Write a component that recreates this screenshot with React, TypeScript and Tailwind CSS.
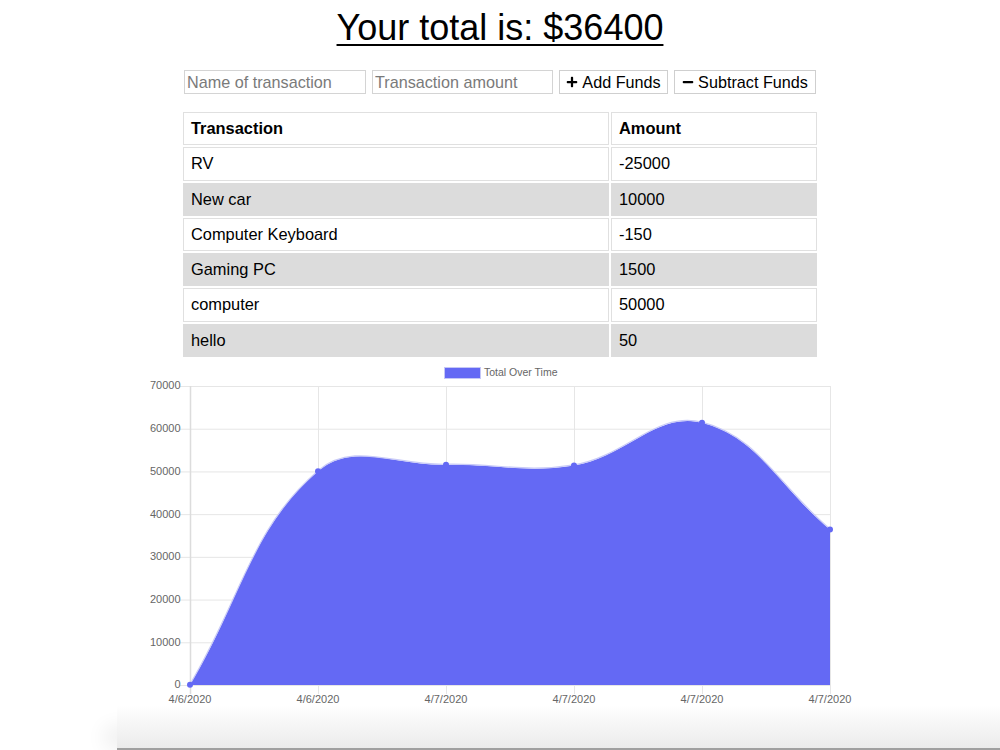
import React from "react";
import { FaPlus, FaMinus } from "react-icons/fa";

const rows: [string, string][] = [
  ["RV", "-25000"],
  ["New car", "10000"],
  ["Computer Keyboard", "-150"],
  ["Gaming PC", "1500"],
  ["computer", "50000"],
  ["hello", "50"],
];

const values = [50, 50050, 51550, 51400, 61400, 36400];
const xs = [190, 318, 446, 574, 702, 830];
const TOP = 386;
const BOTTOM = 685;
const yOf = (v: number) => BOTTOM - (v / 70000) * (BOTTOM - TOP);

type P = { x: number; y: number };

function spline(prev: P, cur: P, next: P, t: number) {
  const d01 = Math.hypot(cur.x - prev.x, cur.y - prev.y);
  const d12 = Math.hypot(next.x - cur.x, next.y - cur.y);
  let s01 = d01 / (d01 + d12);
  let s12 = d12 / (d01 + d12);
  if (isNaN(s01)) s01 = 0;
  if (isNaN(s12)) s12 = 0;
  const fa = t * s01;
  const fb = t * s12;
  return {
    previous: { x: cur.x - fa * (next.x - prev.x), y: cur.y - fa * (next.y - prev.y) },
    next: { x: cur.x + fb * (next.x - prev.x), y: cur.y + fb * (next.y - prev.y) },
  };
}

const clamp = (p: P): P => ({
  x: Math.min(Math.max(p.x, 190), 830),
  y: Math.min(Math.max(p.y, TOP), BOTTOM),
});

function buildPath() {
  const pts: P[] = values.map((v, i) => ({ x: xs[i], y: yOf(v) }));
  const cps = pts.map((p, i) => {
    const prev = pts[i - 1] ?? p;
    const next = pts[i + 1] ?? p;
    const c = spline(prev, p, next, 0.4);
    return { previous: clamp(c.previous), next: clamp(c.next) };
  });
  let d = `M ${pts[0].x} ${pts[0].y}`;
  for (let i = 0; i < pts.length - 1; i++) {
    const a = cps[i].next;
    const b = cps[i + 1].previous;
    const p = pts[i + 1];
    d += ` C ${a.x} ${a.y} ${b.x} ${b.y} ${p.x} ${p.y}`;
  }
  return { line: d, pts };
}

function Chart() {
  const { line, pts } = buildPath();
  const area = `${line} L 830 ${BOTTOM} L 190 ${BOTTOM} Z`;
  const yTicks = [0, 10000, 20000, 30000, 40000, 50000, 60000, 70000];
  const xLabels = ["4/6/2020", "4/6/2020", "4/7/2020", "4/7/2020", "4/7/2020", "4/7/2020"];
  const font = { fontFamily: '"Liberation Sans", Arial, sans-serif' };
  return (
    <svg
      width={1000}
      height={343}
      viewBox="0 362 1000 343"
      className="block mt-[3px]"
      style={font}
    >
      {/* legend */}
      <rect x={444.5} y={367.5} width={36} height={11} fill="#6469f4" stroke="#c5c7f6" strokeWidth={1} />
      <text x={484} y={373.5} fontSize={10.5} fill="#666" dominantBaseline="middle">
        Total Over Time
      </text>
      {/* horizontal grid */}
      {yTicks.map((v) => (
        <g key={v}>
          <line x1={180} x2={830} y1={yOf(v) + 0.5} y2={yOf(v) + 0.5} stroke="#e6e6e6" strokeWidth={1} />
          <text x={180.5} y={yOf(v) + 0.5} fontSize={11} fill="#666" textAnchor="end" dominantBaseline="middle">
            {v}
          </text>
        </g>
      ))}
      {/* vertical grid */}
      {xs.map((x, i) => (
        <g key={i}>
          <line
            x1={x + 0.5}
            x2={x + 0.5}
            y1={TOP}
            y2={BOTTOM + 9}
            stroke={i === 0 ? "#dcdcdc" : "#e6e6e6"}
            strokeWidth={i === 0 ? 1.5 : 1}
          />
          <text x={x} y={700} fontSize={11} fill="#666" textAnchor="middle" dominantBaseline="middle">
            {xLabels[i]}
          </text>
        </g>
      ))}
      <path d={area} fill="#6469f4" />
      <path d={line} fill="none" stroke="#c9cbf7" strokeWidth={1.2} transform="translate(0,-0.6)" />
      {pts.map((p, i) => (
        <circle key={i} cx={p.x} cy={p.y} r={3} fill="#6469f4" />
      ))}
    </svg>
  );
}

export default function App() {
  return (
    <div
      className="w-[1000px] h-[750px] overflow-hidden bg-white flex flex-col items-center text-black"
      style={{ fontFamily: '"Liberation Sans", Arial, sans-serif' }}
    >
      <h1 className="mt-[8px] text-[36px] leading-[40px] underline decoration-[2px] underline-offset-[4px]">
        Your total is: $36400
      </h1>
      <div className="mt-[22px] flex gap-[6px] h-[24px]">
        <input
          className="w-[182px] h-[24px] border border-[#d4d4d4] px-[2px] text-[16.2px] outline-none placeholder:text-[#7a7a7a]"
          placeholder="Name of transaction"
        />
        <input
          className="w-[181px] h-[24px] border border-[#d4d4d4] px-[2px] text-[16.2px] outline-none placeholder:text-[#7a7a7a]"
          placeholder="Transaction amount"
        />
        <button className="w-[109px] h-[24px] border border-[#cfcfcf] bg-white flex items-center justify-center gap-[4px] text-[16.2px] leading-none">
          <FaPlus className="w-[12px] h-[12px]" />
          <span>Add Funds</span>
        </button>
        <button className="w-[142px] h-[24px] border border-[#cfcfcf] bg-white flex items-center justify-center gap-[4px] text-[16.2px] leading-none">
          <FaMinus className="w-[12px] h-[12px]" />
          <span>Subtract Funds</span>
        </button>
      </div>
      <table className="mt-[16px] w-[638px] border-separate border-spacing-[2px] text-[16.4px]">
        <thead>
          <tr>
            <th className="w-[426px] border border-[#e0e0e0] pl-[7px] pr-[6px] py-[7px] leading-[17.3px] text-left font-bold">
              Transaction
            </th>
            <th className="border border-[#e0e0e0] pl-[7px] pr-[6px] py-[7px] leading-[17.3px] text-left font-bold">Amount</th>
          </tr>
        </thead>
        <tbody>
          {rows.map(([name, amt], i) => {
            const gray = i % 2 === 1;
            const cls = gray
              ? "border border-[#dcdcdc] bg-[#dcdcdc] pl-[7px] pr-[6px] py-[7px] leading-[17.3px]"
              : "border border-[#e0e0e0] bg-white pl-[7px] pr-[6px] py-[7px] leading-[17.3px]";
            return (
              <tr key={i}>
                <td className={cls}>{name}</td>
                <td className={cls}>{amt}</td>
              </tr>
            );
          })}
        </tbody>
      </table>
      <Chart />
      <div className="self-stretch flex-1 ml-[117px] bg-gradient-to-b from-white to-[#ebebeb] border-b-2 border-[#a0a0a0] shadow-[-24px_10px_20px_-12px_rgba(0,0,0,0.07)]" />
    </div>
  );
}
